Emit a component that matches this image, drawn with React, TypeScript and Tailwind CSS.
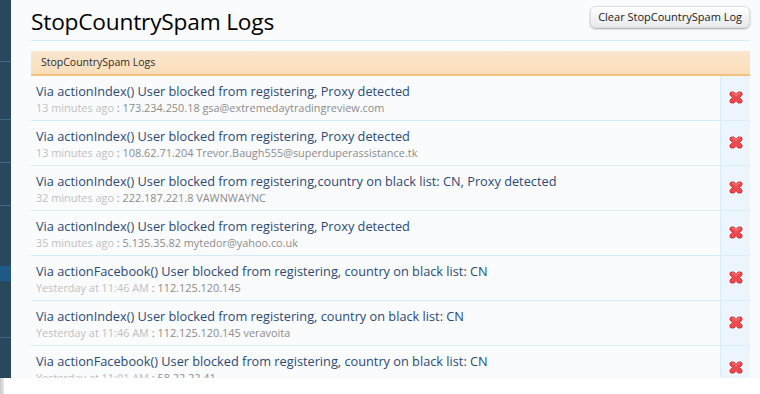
const logs = [
  { msg: 'Via actionIndex() User blocked from registering, Proxy detected', time: '13 minutes ago', info: '173.234.250.18 gsa@extremedaytradingreview.com' },
  { msg: 'Via actionIndex() User blocked from registering, Proxy detected', time: '13 minutes ago', info: '108.62.71.204 Trevor.Baugh555@superduperassistance.tk' },
  { msg: 'Via actionIndex() User blocked from registering,country on black list: CN, Proxy detected', time: '32 minutes ago', info: '222.187.221.8 VAWNWAYNC' },
  { msg: 'Via actionIndex() User blocked from registering, Proxy detected', time: '35 minutes ago', info: '5.135.35.82 mytedor@yahoo.co.uk' },
  { msg: 'Via actionFacebook() User blocked from registering, country on black list: CN', time: 'Yesterday at 11:46 AM', info: '112.125.120.145' },
  { msg: 'Via actionIndex() User blocked from registering, country on black list: CN', time: 'Yesterday at 11:46 AM', info: '112.125.120.145 veravoita' },
  { msg: 'Via actionFacebook() User blocked from registering, country on black list: CN', time: 'Yesterday at 11:01 AM', info: '58.22.22.41' },
]

function DeleteIcon() {
  return (
    <svg width="14" height="13" viewBox="0 0 14 13">
      <path
        d="M2 1h3l2 2.5L9 1h3l1 1v2l-2.5 2.5L13 9v2l-1 1H9L7 9.5 5 12H2l-1-1V9l2.5-2.5L1 4V2z"
        fill="#f0494d"
        stroke="#c8262b"
        strokeWidth="0.8"
      />
      <path d="M3 2h1.5l2.5 3 2.5-3H11" stroke="#ff9a9a" strokeWidth="0.8" fill="none" />
    </svg>
  )
}

function Sidebar() {
  return (
    <div className="w-[11px] shrink-0 bg-[#29475d] flex flex-col">
      <div className="h-[61px]" />
      <div className="h-px bg-[#3b6a8a]" />
      <div className="h-[57px]" />
      <div className="h-px bg-[#3b6a8a]" />
      <div className="h-[42px]" />
      <div className="h-px bg-[#3b6a8a]" />
      <div className="h-[42px]" />
      <div className="h-px bg-[#3b6a8a]" />
      <div className="h-[60px]" />
      <div className="h-[15px] bg-[#1f5a86]" />
      <div className="h-[56px]" />
      <div className="h-px bg-[#3b6a8a]" />
    </div>
  )
}

export default function App() {
  return (
    <div className="w-[760px] h-[394px] overflow-hidden bg-white flex flex-col font-['Open_Sans',sans-serif]">
      <div className="flex h-[378px] overflow-hidden">
        <Sidebar />
        <div className="flex-1 bg-[#fafbfd] pl-[20px] pr-[10px]">
          {/* title */}
          <div className="h-[41px] flex justify-between border-b border-[#d7edfc]">
            <h1 className="text-[22.7px] leading-none pt-[11px] text-black tracking-[-0.2px]">
              StopCountrySpam Logs
            </h1>
            <button className="mt-[6px] h-[22px] px-[7px] rounded-[6px] text-[11px] text-[#1c1c1c] bg-gradient-to-b from-white to-[#e8e9ee] border border-[#dcdee5] shadow-[0_1px_2px_rgba(0,0,0,0.35)]">
              Clear StopCountrySpam Log
            </button>
          </div>

          {/* list header */}
          <div className="mt-[10px] h-[25px] flex items-center pl-[10px] text-[10.5px] text-[#2d2d2d] bg-gradient-to-b from-[#fbe6cd] to-[#f9deba] border-b-2 border-[#f4c17f]">
            StopCountrySpam Logs
          </div>

          {/* rows */}
          {logs.map((log, i) => (
            <div key={i} className="flex h-[45px] border-b border-[#d7edfc]">
              <div className="flex-1 pl-[5px] pt-[7px]">
                <div className="text-[12.75px] leading-[17px] text-[#2a4a74]">{log.msg}</div>
                <div className="text-[10.9px] leading-[15px] text-[#8c8c8c]">
                  <span className="text-[#c0c0c0]">{log.time}</span> : {log.info}
                </div>
              </div>
              <div className="w-[30px] shrink-0 bg-[#edf5fc] border-l border-[#d7edfc] flex items-center justify-center pb-[2px]">
                <DeleteIcon />
              </div>
            </div>
          ))}
        </div>
      </div>
      <div className="h-[16px] flex">
        <div className="w-[4px] bg-gradient-to-r from-[#c9c9c9] to-[#e8e8e8]" />
        <div className="flex-1 bg-white" />
      </div>
    </div>
  )
}
